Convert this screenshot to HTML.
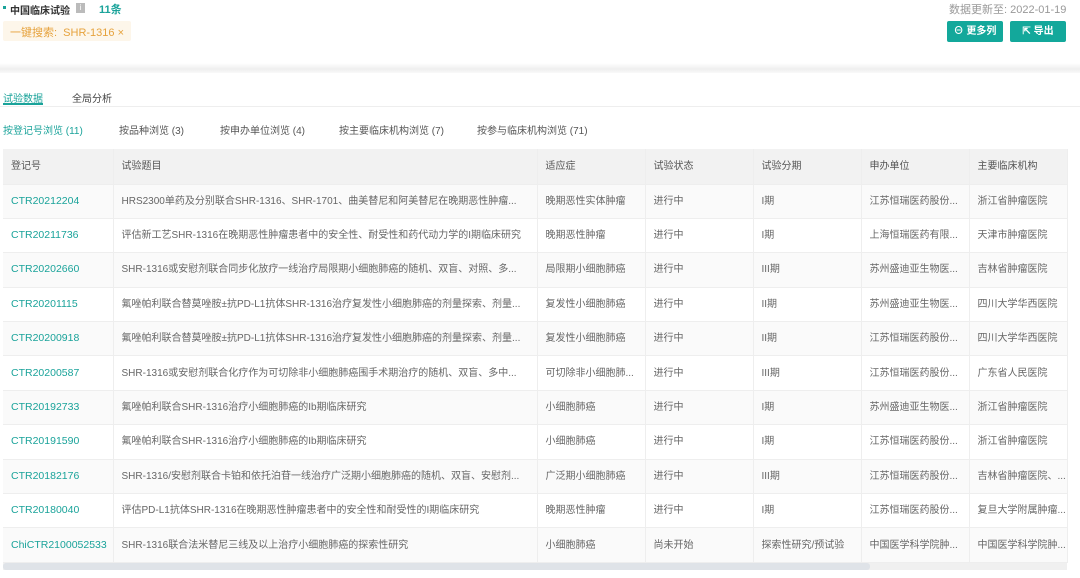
<!DOCTYPE html>
<html><head><meta charset="utf-8"><style>
*{margin:0;padding:0;box-sizing:border-box}
body{width:1080px;height:578px;overflow:hidden;background:#fff;font-family:"Liberation Sans","Noto Sans CJK SC",sans-serif;font-size:10px;color:#555;position:relative}
.a{position:absolute;white-space:nowrap}
.g{color:#1aa39a}
table{position:absolute;left:3px;top:149px;border-collapse:collapse;table-layout:fixed;width:1064px}
td,th{height:34.4px;padding:0 8px;text-align:left;font-weight:normal;white-space:nowrap;overflow:hidden;border-right:1px solid #eee;border-bottom:1px solid #eee;font-size:10px;line-height:33px;vertical-align:middle;color:#666}
th{background:#f2f2f2;color:#555;height:35px}
tr:nth-child(even) td{background:#fafafa}
td:first-child{color:#1aa39a;font-size:10.5px}
.btn{position:absolute;top:21px;height:21px;background:#13a89b;color:#fff;border-radius:2px;font-size:10px;font-weight:bold;line-height:21px;text-align:center}
</style></head><body>
<div class="a" style="left:3px;top:6px;width:3px;height:3px;background:#1aa39a"></div>
<div class="a" style="left:10px;top:2px;font-size:10px;font-weight:bold;color:#333">中国临床试验</div>
<div class="a" style="left:76px;top:3px;width:9px;height:10px;background:#bbb;color:#fff;font-size:8px;text-align:center;line-height:10px">i</div>
<div class="a g" style="left:99px;top:1px;font-size:11px;font-weight:bold">11条</div>
<div class="a" style="left:3px;top:21px;width:128px;height:20px;background:#fdf6ea;border-radius:2px"></div>
<div class="a" style="left:10px;top:24px;font-size:11px;color:#e6a23c">一键搜索: &nbsp;SHR-1316 ×</div>
<div class="a" style="left:949px;top:1px;font-size:11px;color:#999">数据更新至: 2022-01-19</div>
<div class="btn" style="left:947px;width:56px">⊖ 更多列</div>
<div class="btn" style="left:1010px;width:56px">⇱ 导出</div>
<div class="a" style="left:0;top:63px;width:1080px;height:10px;background:linear-gradient(#fff,#efefef 60%,#f9f9f9)"></div>
<div class="a g" style="left:3px;top:90px">试验数据</div>
<div class="a" style="left:3px;top:103px;width:40px;height:2px;background:#1aa39a"></div>
<div class="a" style="left:72px;top:90px;color:#444">全局分析</div>
<div class="a" style="left:0;top:106px;width:1080px;height:1px;background:#eee"></div>
<div class="a g" style="left:3px;top:122px">按登记号浏览 (11)</div>
<div class="a" style="left:119px;top:122px">按品种浏览 (3)</div>
<div class="a" style="left:220px;top:122px">按申办单位浏览 (4)</div>
<div class="a" style="left:339px;top:122px">按主要临床机构浏览 (7)</div>
<div class="a" style="left:477px;top:122px">按参与临床机构浏览 (71)</div>
<table>
<colgroup><col style="width:110px"><col style="width:424px"><col style="width:108px"><col style="width:108px"><col style="width:108px"><col style="width:108px"><col style="width:98px"></colgroup>
<tr><th>登记号</th><th>试验题目</th><th>适应症</th><th>试验状态</th><th>试验分期</th><th>申办单位</th><th>主要临床机构</th></tr>
<tr><td>CTR20212204</td><td>HRS2300单药及分别联合SHR-1316、SHR-1701、曲美替尼和阿美替尼在晚期恶性肿瘤...</td><td>晚期恶性实体肿瘤</td><td>进行中</td><td>I期</td><td>江苏恒瑞医药股份...</td><td>浙江省肿瘤医院</td></tr>
<tr><td>CTR20211736</td><td>评估新工艺SHR-1316在晚期恶性肿瘤患者中的安全性、耐受性和药代动力学的I期临床研究</td><td>晚期恶性肿瘤</td><td>进行中</td><td>I期</td><td>上海恒瑞医药有限...</td><td>天津市肿瘤医院</td></tr>
<tr><td>CTR20202660</td><td>SHR-1316或安慰剂联合同步化放疗一线治疗局限期小细胞肺癌的随机、双盲、对照、多...</td><td>局限期小细胞肺癌</td><td>进行中</td><td>III期</td><td>苏州盛迪亚生物医...</td><td>吉林省肿瘤医院</td></tr>
<tr><td>CTR20201115</td><td>氟唑帕利联合替莫唑胺±抗PD-L1抗体SHR-1316治疗复发性小细胞肺癌的剂量探索、剂量...</td><td>复发性小细胞肺癌</td><td>进行中</td><td>II期</td><td>苏州盛迪亚生物医...</td><td>四川大学华西医院</td></tr>
<tr><td>CTR20200918</td><td>氟唑帕利联合替莫唑胺±抗PD-L1抗体SHR-1316治疗复发性小细胞肺癌的剂量探索、剂量...</td><td>复发性小细胞肺癌</td><td>进行中</td><td>II期</td><td>江苏恒瑞医药股份...</td><td>四川大学华西医院</td></tr>
<tr><td>CTR20200587</td><td>SHR-1316或安慰剂联合化疗作为可切除非小细胞肺癌围手术期治疗的随机、双盲、多中...</td><td>可切除非小细胞肺...</td><td>进行中</td><td>III期</td><td>江苏恒瑞医药股份...</td><td>广东省人民医院</td></tr>
<tr><td>CTR20192733</td><td>氟唑帕利联合SHR-1316治疗小细胞肺癌的Ib期临床研究</td><td>小细胞肺癌</td><td>进行中</td><td>I期</td><td>苏州盛迪亚生物医...</td><td>浙江省肿瘤医院</td></tr>
<tr><td>CTR20191590</td><td>氟唑帕利联合SHR-1316治疗小细胞肺癌的Ib期临床研究</td><td>小细胞肺癌</td><td>进行中</td><td>I期</td><td>江苏恒瑞医药股份...</td><td>浙江省肿瘤医院</td></tr>
<tr><td>CTR20182176</td><td>SHR-1316/安慰剂联合卡铂和依托泊苷一线治疗广泛期小细胞肺癌的随机、双盲、安慰剂...</td><td>广泛期小细胞肺癌</td><td>进行中</td><td>III期</td><td>江苏恒瑞医药股份...</td><td>吉林省肿瘤医院、...</td></tr>
<tr><td>CTR20180040</td><td>评估PD-L1抗体SHR-1316在晚期恶性肿瘤患者中的安全性和耐受性的I期临床研究</td><td>晚期恶性肿瘤</td><td>进行中</td><td>I期</td><td>江苏恒瑞医药股份...</td><td>复旦大学附属肿瘤...</td></tr>
<tr><td>ChiCTR2100052533</td><td>SHR-1316联合法米替尼三线及以上治疗小细胞肺癌的探索性研究</td><td>小细胞肺癌</td><td>尚未开始</td><td>探索性研究/预试验</td><td>中国医学科学院肿...</td><td>中国医学科学院肿...</td></tr>
</table>
<div class="a" style="left:3px;top:563px;width:1064px;height:7px;background:#f0f0f0"></div>
<div class="a" style="left:3px;top:563px;width:867px;height:7px;background:#dfe3e8;border-radius:3px"></div>
</body></html>
